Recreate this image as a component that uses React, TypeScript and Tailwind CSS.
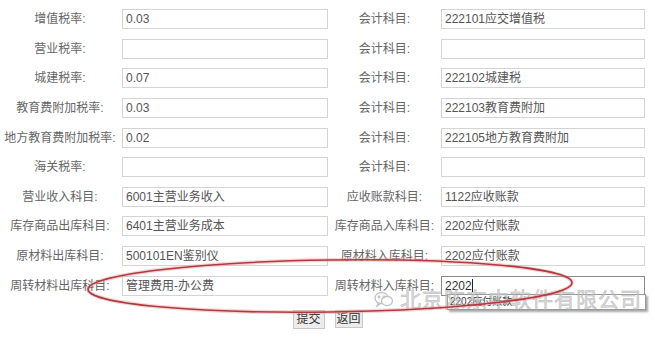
import React from "react";

const rows: [string, string, string, string][] = [
	["增值税率:", "0.03", "会计科目:", "222101应交增值税"],
	["营业税率:", "", "会计科目:", ""],
	["城建税率:", "0.07", "会计科目:", "222102城建税"],
	["教育费附加税率:", "0.03", "会计科目:", "222103教育费附加"],
	["地方教育费附加税率:", "0.02", "会计科目:", "222105地方教育费附加"],
	["海关税率:", "", "会计科目:", ""],
	["营业收入科目:", "6001主营业务收入", "应收账款科目:", "1122应收账款"],
	["库存商品出库科目:", "6401主营业务成本", "库存商品入库科目:", "2202应付账款"],
	["原材料出库科目:", "500101EN鉴别仪", "原材料入库科目:", "2202应付账款"],
	["周转材料出库科目:", "管理费用-办公费", "周转材料入库科目:", "2202"],
];

const Field = ({ value, focused }: { value: string; focused?: boolean }) => (
	<div
		className={
			focused
				? "h-5 border border-[#8a8a8a] bg-white pl-[3px] text-[12px] leading-[18px] text-[#333]"
				: "h-5 border border-[#d4d4d4] bg-white pl-[3px] text-[12px] leading-[18px] text-[#555]"
		}
	>
		{value}
		{focused && <span className="inline-block h-[13px] w-px translate-y-[2px] bg-[#222]" />}
	</div>
);

const WeChatMark = () => (
	<svg width="20" height="17" viewBox="0 0 20 17" fill="none" stroke="#b0b0b0" strokeWidth="1.3">
		<ellipse cx="7.5" cy="7" rx="6.5" ry="5.5" />
		<path d="M4 12 L3 15 L6.5 12.6" />
		<ellipse cx="13" cy="10" rx="5.5" ry="4.5" fill="white" />
		<circle cx="5" cy="6" r="0.8" fill="#b0b0b0" />
		<circle cx="10" cy="6" r="0.8" fill="#b0b0b0" />
	</svg>
);

export default function App() {
	return (
		<div
			className="relative h-[338px] w-[653px] overflow-hidden bg-white text-[12px] text-[#666]"
			style={{ fontFamily: '"Liberation Sans", "Noto Sans CJK SC", sans-serif' }}
		>
			<div className="grid grid-cols-[122px_206px_113px_204px] gap-y-[9.65px] pt-[9px]">
				{rows.map(([l1, v1, l2, v2], i) => (
					<React.Fragment key={i}>
						<div className="flex h-5 items-center justify-center pr-[2px] whitespace-nowrap">{l1}</div>
						<Field value={v1} />
						<div className="flex h-5 items-center justify-center whitespace-nowrap">{l2}</div>
						<div className="relative">
							<Field value={v2} focused={i === rows.length - 1} />
							{i === rows.length - 1 && (
								<div className="absolute left-[6px] top-[18px] h-[16px] w-[199px] border border-[#999] bg-white pl-[2px] text-[10px] leading-[14px] text-[#333] shadow-[2px_2px_2px_rgba(0,0,0,0.35)]">
									2202应付账款
								</div>
							)}
						</div>
					</React.Fragment>
				))}
			</div>

			<div className="mt-[14px] flex justify-center gap-[10px] pl-[2px]">
				<button className="h-[19px] w-[32px] border border-[#c8c8c8] bg-[#ececec] text-[12px] leading-none text-[#333]">
					提交
				</button>
				<button className="h-[18px] w-[28px] border border-[#c8c8c8] bg-[#ececec] text-[12px] leading-none text-[#333]">
					返回
				</button>
			</div>

			<div className="pointer-events-none absolute left-[374px] top-[289px] flex items-center gap-[6px] opacity-75">
				<WeChatMark />
				<span
					className="text-[21px] leading-none tracking-[1px] text-[#d0d0d0]"
					style={{ WebkitTextStroke: "0.5px #a0a0a0" }}
				>
					北京陈东中软件有限公司
				</span>
			</div>

			<svg className="pointer-events-none absolute left-0 top-0" width="653" height="338">
				<g transform="rotate(-0.8 330 286)">
					<ellipse cx="330" cy="286" rx="242" ry="26" fill="none" stroke="#e8a0a0" strokeWidth="4" opacity="0.45" />
					<ellipse cx="330" cy="286" rx="242" ry="26" fill="none" stroke="#b03a3f" strokeWidth="1.6" />
				</g>
			</svg>
		</div>
	);
}
